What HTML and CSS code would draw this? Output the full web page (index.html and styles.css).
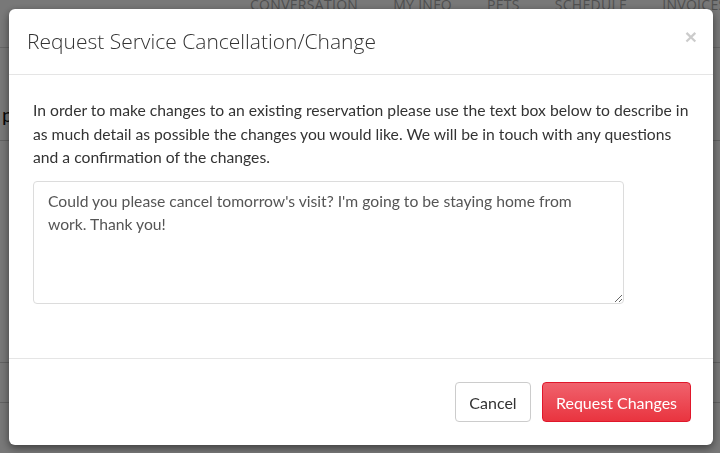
FILE: index.html
```html
<!DOCTYPE html>
<html lang="en">
<head>
<meta charset="utf-8">
<title>Request Service Cancellation/Change</title>
<link rel="stylesheet" href="styles.css">
</head>
<body>
<div class="page">
  <nav class="topnav">
    <span>Conversation</span>
    <span>My Info</span>
    <span>Pets</span>
    <span>Schedule</span>
    <span>Invoices</span>
  </nav>
  <div class="page-body">
    <div class="page-row page-row-title"><span class="page-letter">p</span></div>
    <div class="page-row page-row-tall"></div>
    <div class="page-row"></div>
  </div>
</div>
<div class="backdrop"></div>
<div class="modal-layer">
  <div class="modal">
    <div class="modal-header">
      <h4 class="modal-title">Request Service Cancellation/Change</h4>
      <button class="close" type="button" aria-label="Close">&times;</button>
    </div>
    <div class="modal-body">
      <p class="intro">In order to make changes to an existing reservation please use the text box below to describe in as much detail as possible the changes you would like. We will be in touch with any questions and a confirmation of the changes.</p>
      <textarea class="request-text">Could you please cancel tomorrow's visit? I'm going to be staying home from work. Thank you!</textarea>
    </div>
    <div class="modal-footer">
      <button class="btn btn-default" type="button">Cancel</button>
      <button class="btn btn-danger" type="button">Request Changes</button>
    </div>
  </div>
</div>
</body>
</html>
```
FILE: styles.css
```css
* { box-sizing: border-box; }
html, body { margin: 0; height: 100%; }
body {
  background: #ffffff;
  font-family: "Lato", "Liberation Sans", sans-serif;
  color: #333;
  overflow: hidden;
}
.page { height: 100%; }
.topnav {
  display: flex;
  height: 53px;
  margin-top: -5px;
  padding-left: 250px;
  border-bottom: 1px solid #d9d9d9;
  font-family: "Open Sans", sans-serif;
  font-size: 14px;
  letter-spacing: 0.3px;
  text-transform: uppercase;
  color: #aaa;
  white-space: nowrap;
}
.topnav span { margin-right: 35px; }
.page-body { display: flex; flex-direction: column; }
.page-row { border-bottom: 1px solid #d0d0d0; height: 40px; }
.page-row-title { height: 93px; padding-top: 54px; }
.page-letter { font-size: 20px; margin-left: 2px; color: #111; }
.page-row-tall { height: 222px; }
.backdrop {
  position: fixed;
  inset: 0;
  background: rgba(0, 0, 0, 0.53);
}
.modal-layer {
  position: fixed;
  inset: 0;
  padding: 9px 7px 8px 9px;
}
.modal {
  width: 704px;
  height: 436px;
  background: #fff;
  border-radius: 6px;
  box-shadow: 0 3px 9px rgba(0, 0, 0, 0.5);
  display: flex;
  flex-direction: column;
}
.modal-header {
  display: flex;
  align-items: center;
  justify-content: space-between;
  height: 66px;
  padding: 0 18px;
  border-bottom: 1px solid #e5e5e5;
}
.modal-title {
  margin: 0;
  margin-top: -2px;
  font-family: "Open Sans", sans-serif;
  font-weight: 300;
  font-size: 21px;
  color: #333;
}
.close {
  border: 0;
  background: none;
  padding: 0;
  margin-top: -10px;
  margin-right: -2px;
  font-family: "Liberation Sans", sans-serif;
  font-size: 21px;
  font-weight: bold;
  color: #000;
  opacity: 0.2;
}
.modal-body {
  flex: 1;
  padding: 24px 24px 0 24px;
  border-bottom: 1px solid #e5e5e5;
}
.intro {
  margin: 0 0 11px;
  font-size: 15.7px;
  line-height: 23.5px;
  color: #333;
}
.request-text {
  display: block;
  width: 591px;
  height: 123px;
  padding: 8px 14px;
  border: 1px solid #dcdcdc;
  border-radius: 4px;
  font-family: "Lato", sans-serif;
  font-size: 15.7px;
  line-height: 23.5px;
  color: #555;
  resize: vertical;
}
.modal-footer {
  display: flex;
  justify-content: flex-end;
  gap: 11px;
  height: 86px;
  padding: 23px 22px 0 0;
}
.btn {
  height: 40px;
  padding: 0;
  border-radius: 4px;
  font-family: "Lato", sans-serif;
  font-size: 16px;
  white-space: nowrap;
  cursor: pointer;
}
.btn-default {
  width: 76px;
  background: #fff;
  border: 1px solid #ccc;
  color: #333;
}
.btn-danger {
  width: 149px;
  background: linear-gradient(#f0626d, #e9343f);
  border: 1px solid #e0172b;
  color: #fff;
}
```
